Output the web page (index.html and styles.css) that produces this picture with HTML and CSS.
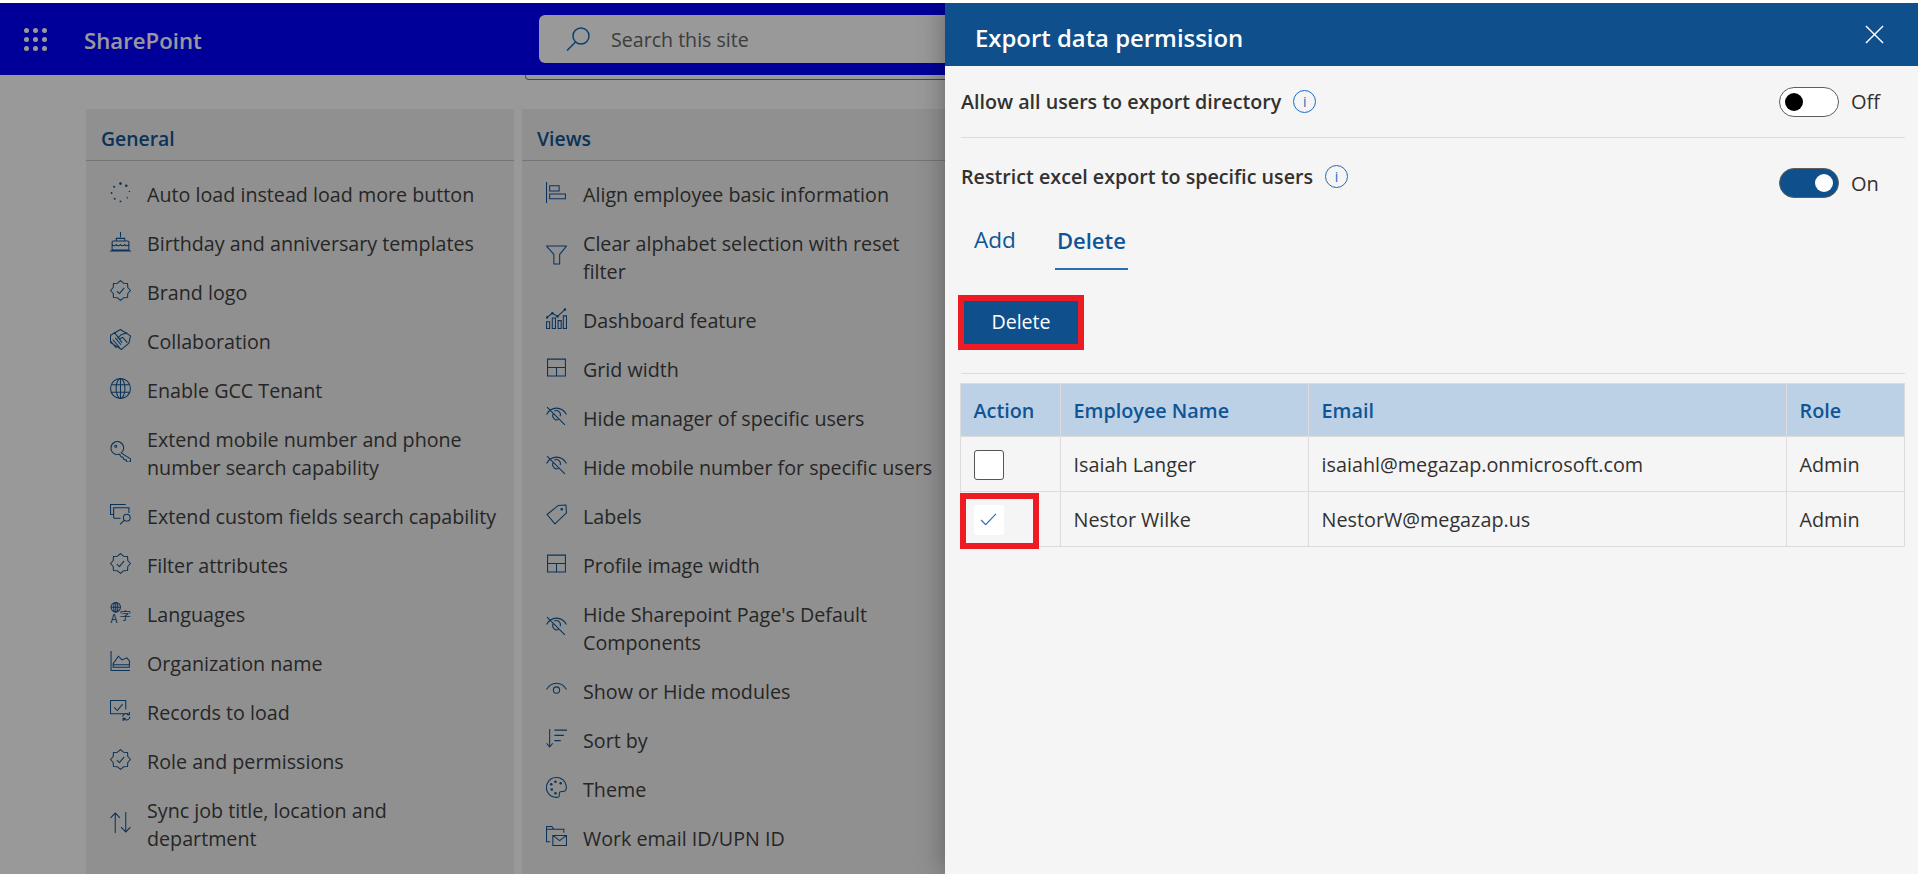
FILE: index.html
```html
<!DOCTYPE html>
<html lang="en">

<head>
    <meta charset="UTF-8">
    <title>Export data permission</title>
    <link rel="stylesheet" href="styles.css">
</head>

<body>
    <svg class="icon-defs" aria-hidden="true">
        <symbol id="i-spin" viewBox="0 0 20 20"><g fill="currentColor" stroke="none"><circle cx="10" cy="1.5" r="1.3"/><circle cx="15.5" cy="3.5" r="1.2"/><circle cx="18.5" cy="9" r=".7"/><circle cx="16.5" cy="15" r=".7"/><circle cx="10" cy="18.5" r=".9"/><circle cx="4.5" cy="16" r=".9"/><circle cx="1.5" cy="10.5" r=".9"/><circle cx="4" cy="4.5" r="1"/></g></symbol>
        <symbol id="i-cake" viewBox="0 0 20 20"><path d="M10 1v5M3 9.5h14a1 1 0 0 1 1 1V18H2v-7.5a1 1 0 0 1 1-1zM6 9.5V7h8v2.500M2 13c2 1.500 3 1.500 4 0 1 1.500 3 1.500 4 0 1 1.500 3 1.500 4 0 1 1.500 2 1.500 4 0M0 19h20"/></symbol>
        <symbol id="i-badge" viewBox="0 0 20 20"><path d="M10 .5l2.870 2.570 3.850.21.210 3.850L19.500 10l-2.570 2.870-.21 3.850-3.850.21L10 19.500l-2.870-2.570-3.850-.21-.21-3.850L.5 10l2.570-2.870.21-3.850 3.850-.21zM6.500 10.500L9 13l4.500-5.500" stroke-linejoin="round"/></symbol>
        <symbol id="i-hands" viewBox="0 0 20 20"><path d="M10 .5l9.500 6-1.500 7-7 6-10.500-6.500L.5 6zM4 3l7.500 10M16.500 3.500l-6 2-3 3 1.500 1 3-1.500 4.500 5M2.500 10l6.500 7.500M5 8.500l5.500 6.500M1 12l5 6" stroke-linejoin="round"/></symbol>
        <symbol id="i-globe" viewBox="0 0 20 20"><circle cx="10" cy="10" r="9.500"/><ellipse cx="10" cy="10" rx="4.200" ry="9.500"/><path d="M10 .5v19M1.200 6.500h17.600M1.200 13.500h17.600"/></symbol>
        <symbol id="i-key" viewBox="0 0 20 20"><path d="M1 6.500a6 6 0 1 1 9.600 4.800L19.500 17v3h-3.500l-.5-2-2.500-.5-.5-2-2-.5-1.500-2.500a6 6 0 0 1-8-6.500z" stroke-linejoin="round"/><circle cx="5.500" cy="5" r="1"/></symbol>
        <symbol id="i-fields" viewBox="0 0 20 20"><path d="M3 10H.5V.5H15M3.500 13.500V3.500H18v5M3.500 13.500h6.500"/><circle cx="16" cy="13" r="3.200"/><path d="M13.500 15.500L9.500 19.500"/></symbol>
        <symbol id="i-lang" viewBox="0 0 20 20"><circle cx="5.500" cy="5" r="4.500"/><ellipse cx="5.500" cy="5" rx="2" ry="4.500"/><path d="M1 5h9M5.500 .5v9"/><text x="0.500" y="19.800" class="icon-glyph">A</text><text x="9" y="17" class="icon-glyph">字</text></symbol>
        <symbol id="i-chart" viewBox="0 0 20 20"><path d="M1 0v18.500h18M3 15.500V12l5-7 3.500 3.500L16 6.500l2.500 3v6zM3 13h15"/></symbol>
        <symbol id="i-recs" viewBox="0 0 20 20"><path d="M14 13H.5V.5H15V9M4 7l3 3 5-6M12 16a3.500 3.500 0 0 1 6-2M19 16a3.500 3.500 0 0 1-6 2M18.500 11.500V14H16M12.500 20v-2.500H15"/></symbol>
        <symbol id="i-sync" viewBox="0 0 20 20"><path d="M5 20V1M.5 5.500L5 1l4.500 4.500M15 0v19M10.500 14.500L15 19l4.500-4.500"/></symbol>
        <symbol id="i-align" viewBox="0 0 20 20"><path d="M.5 0v20M3.500 3.500h9v5h-9zM3.500 11.500h15v4.500h-15z"/></symbol>
        <symbol id="i-filter" viewBox="0 0 20 20"><path d="M.5 1h19L13 9v9H7.500V9zM.5 1h19" stroke-linejoin="round"/></symbol>
        <symbol id="i-dash" viewBox="0 0 20 20"><path d="M.5 13h3v6.500h-3zM6 9.500h3v10H6zM11.500 12h3v7.500h-3zM16.500 7.500h3v12h-3zM1 9l5-4 5 3 7-6.500"/><g fill="currentColor" stroke="none"><circle cx="6" cy="5" r="1.200"/><circle cx="11" cy="8" r="1.200"/><circle cx="18" cy="1.500" r="1.200"/><circle cx="1" cy="9" r="1.200"/></g></symbol>
        <symbol id="i-grid" viewBox="0 0 20 20"><path d="M1.500 2h17v16h-17zM1.500 10h17M10 10v8"/></symbol>
        <symbol id="i-eyeoff" viewBox="0 0 20 20"><path d="M.5 8C3 3.500 6 2 10 2s7 1.500 9.500 6M1 1l17 17M7 7a4 4 0 0 0 5.500 5.500M8 4.800a4 4 0 0 1 5.500 5"/></symbol>
        <symbol id="i-tag" viewBox="0 0 20 20"><path d="M1 10L11.500 1.500 19 1l.5 7.500L8.500 19z" stroke-linejoin="round"/><circle cx="15" cy="5" r=".8" fill="currentColor"/></symbol>
        <symbol id="i-eye" viewBox="0 0 20 20"><path d="M.5 10C3 5.500 6 4 10 4s7 1.500 9.500 6"/><circle cx="10" cy="10.500" r="3"/></symbol>
        <symbol id="i-sort" viewBox="0 0 20 20"><path d="M3.500 1v17M.5 14.500l3 3.500 3-3.500M8 2h12M8 7h9M8 12h6"/></symbol>
        <symbol id="i-palette" viewBox="0 0 20 20"><path d="M10 .5a9.500 9.500 0 0 0-7 16c2 2.500 6.500 3.500 9 2.500 1.500-1 0-3 1-4.500s4 0 5.500-1.500c1.500-2 1-5-.5-8A9.500 9.500 0 0 0 10 .5z"/><g fill="currentColor" stroke="none"><circle cx="5" cy="7" r="1.200"/><circle cx="9" cy="4.500" r="1.200"/><circle cx="14" cy="6" r="1.200"/><circle cx="5.500" cy="12" r="1.200"/><circle cx="9" cy="15.500" r="1.200"/></g></symbol>
        <symbol id="i-mail" viewBox="0 0 20 20"><path d="M4 15H.5V.5h5l2 2.500H17v3.500M.5 3h7M6.500 9h13v9.500h-13zM6.500 9l6.500 5 6.500-5"/></symbol>
    </svg>

    <div class="app">
        <header class="suite-bar">
            <div class="waffle">
                <i></i><i></i><i></i><i></i><i></i><i></i><i></i><i></i><i></i>
            </div>
            <span class="brand">SharePoint</span>
            <div class="search-box">
                <svg class="search-icon" viewBox="0 0 24 24"><circle cx="15" cy="9" r="8"/><path d="M9.500 15L1 23.500"/></svg>
                <span>Search this site</span>
            </div>
        </header>
        <div class="peek-box"></div>

        <main class="settings">
            <section class="card">
                <h2 class="card-title">General</h2>
                <ul class="item-list">
                    <li><svg class="item-icon"><use href="#i-spin"/></svg><span>Auto load instead load more button</span></li>
                    <li><svg class="item-icon"><use href="#i-cake"/></svg><span>Birthday and anniversary templates</span></li>
                    <li><svg class="item-icon"><use href="#i-badge"/></svg><span>Brand logo</span></li>
                    <li><svg class="item-icon"><use href="#i-hands"/></svg><span>Collaboration</span></li>
                    <li><svg class="item-icon"><use href="#i-globe"/></svg><span>Enable GCC Tenant</span></li>
                    <li><svg class="item-icon"><use href="#i-key"/></svg><span>Extend mobile number and phone<br>number search capability</span></li>
                    <li><svg class="item-icon"><use href="#i-fields"/></svg><span>Extend custom fields search capability</span></li>
                    <li><svg class="item-icon"><use href="#i-badge"/></svg><span>Filter attributes</span></li>
                    <li><svg class="item-icon"><use href="#i-lang"/></svg><span>Languages</span></li>
                    <li><svg class="item-icon"><use href="#i-chart"/></svg><span>Organization name</span></li>
                    <li><svg class="item-icon"><use href="#i-recs"/></svg><span>Records to load</span></li>
                    <li><svg class="item-icon"><use href="#i-badge"/></svg><span>Role and permissions</span></li>
                    <li><svg class="item-icon"><use href="#i-sync"/></svg><span>Sync job title, location and<br>department</span></li>
                </ul>
            </section>

            <section class="card">
                <h2 class="card-title">Views</h2>
                <ul class="item-list">
                    <li><svg class="item-icon"><use href="#i-align"/></svg><span>Align employee basic information</span></li>
                    <li><svg class="item-icon"><use href="#i-filter"/></svg><span>Clear alphabet selection with reset<br>filter</span></li>
                    <li><svg class="item-icon"><use href="#i-dash"/></svg><span>Dashboard feature</span></li>
                    <li><svg class="item-icon"><use href="#i-grid"/></svg><span>Grid width</span></li>
                    <li><svg class="item-icon"><use href="#i-eyeoff"/></svg><span>Hide manager of specific users</span></li>
                    <li><svg class="item-icon"><use href="#i-eyeoff"/></svg><span>Hide mobile number for specific users</span></li>
                    <li><svg class="item-icon"><use href="#i-tag"/></svg><span>Labels</span></li>
                    <li><svg class="item-icon"><use href="#i-grid"/></svg><span>Profile image width</span></li>
                    <li><svg class="item-icon"><use href="#i-eyeoff"/></svg><span>Hide Sharepoint Page's Default<br>Components</span></li>
                    <li><svg class="item-icon"><use href="#i-eye"/></svg><span>Show or Hide modules</span></li>
                    <li><svg class="item-icon"><use href="#i-sort"/></svg><span>Sort by</span></li>
                    <li><svg class="item-icon"><use href="#i-palette"/></svg><span>Theme</span></li>
                    <li><svg class="item-icon"><use href="#i-mail"/></svg><span>Work email ID/UPN ID</span></li>
                </ul>
            </section>
        </main>

        <div class="dim"></div>

        <aside class="panel">
            <div class="panel-head">
                <h1>Export data permission</h1>
                <svg class="close-icon" viewBox="0 0 20 20"><path d="M1 1l18 18M19 1L1 19"/></svg>
            </div>

            <div class="panel-body">
                <div class="option option-first">
                    <div class="option-label">
                        Allow all users to export directory
                        <span class="info">i</span>
                    </div>
                    <div class="switch-wrap">
                        <span class="switch"></span>
                        <span>Off</span>
                    </div>
                </div>

                <div class="option option-second">
                    <div class="option-label">
                        Restrict excel export to specific users
                        <span class="info">i</span>
                    </div>
                    <div class="switch-wrap">
                        <span class="switch on"></span>
                        <span>On</span>
                    </div>
                </div>

                <div class="tabs">
                    <span class="tab">Add</span>
                    <span class="tab active">Delete</span>
                </div>

                <button class="delete-btn">Delete</button>

                <hr class="rule">

                <table class="users">
                    <thead>
                        <tr>
                            <th class="col-action">Action</th>
                            <th class="col-name">Employee Name</th>
                            <th class="col-email">Email</th>
                            <th>Role</th>
                        </tr>
                    </thead>
                    <tbody>
                        <tr>
                            <td><span class="check"></span></td>
                            <td>Isaiah Langer</td>
                            <td>isaiahl@megazap.onmicrosoft.com</td>
                            <td>Admin</td>
                        </tr>
                        <tr>
                            <td class="marked">
                                <span class="check checked">
                                    <svg viewBox="0 0 18 14"><path d="M1 7.500l5 5L17 1"/></svg>
                                </span>
                            </td>
                            <td>Nestor Wilke</td>
                            <td>NestorW@megazap.us</td>
                            <td>Admin</td>
                        </tr>
                    </tbody>
                </table>
            </div>
        </aside>
    </div>
</body>

</html>
```

FILE: styles.css
```css
*,
*::after {
    box-sizing: border-box;
}

html,
body {
    height: 100%;
    margin: 0;
    overflow: hidden;
    background-color: white;
}

body {
    font-family: 'Open Sans', 'Noto Sans', sans-serif;
    color: #323130;
}

.icon-defs {
    display: none;
}

.icon-glyph {
    font-size: 11px;
    fill: currentColor;
    stroke: none;
    font-family: 'Noto Sans CJK SC', sans-serif;
}

.app {
    position: relative;
    height: 871px;
    margin-top: 3px;
    overflow: hidden;
    background-color: white;
}

/* top bar */
.suite-bar {
    display: flex;
    align-items: center;
    height: 72px;
    background-color: #0000ff;
    color: white;
}

.waffle {
    display: grid;
    grid-template-columns: repeat(3, 5px);
    gap: 4px;
    margin-left: 24px;
}

.waffle i {
    width: 5px;
    height: 5px;
    border-radius: 50%;
    background-color: white;
}

.brand {
    width: 455px;
    margin-left: 37px;
    padding-top: 2px;
    font-size: 22.200px;
    font-weight: 600;
}

.search-box {
    display: flex;
    align-items: center;
    flex: 1;
    height: 48px;
    padding-left: 27px;
    border-radius: 6px;
    background-color: white;
    color: #666;
    font-size: 19.600px;
}

.search-icon {
    width: 24px;
    height: 24px;
    margin-right: 21px;
    fill: none;
    stroke: #0f6cbd;
    stroke-width: 1.500;
}

.peek-box {
    height: 5px;
    margin-left: 525px;
    border: 1px solid #777;
    border-top: none;
    border-radius: 0 0 0 4px;
}

/* settings cards behind the panel */
.settings {
    display: grid;
    grid-template-columns: 428px 470px;
    gap: 8px;
    margin-top: 29px;
    padding-left: 86px;
}

.card {
    height: 800px;
    background-color: #f0f0f0;
}

.card-title {
    height: 52px;
    margin: 0;
    padding: 0 0 0 15px;
    border-bottom: 1px solid #c4c4c4;
    font-size: 19.400px;
    font-weight: 600;
    line-height: 60px;
    color: #0f5596;
}

.item-list {
    display: flex;
    flex-direction: column;
    gap: 21px;
    margin: 0;
    padding: 20px 0 0 24px;
    list-style: none;
}

.item-list li {
    display: flex;
    align-items: center;
    font-size: 19.700px;
    line-height: 28px;
    color: #404040;
    white-space: nowrap;
}

.item-icon {
    flex: none;
    width: 21px;
    height: 21px;
    margin: -5px 16px 0 0;
    fill: none;
    stroke: #0f5596;
    stroke-width: 1;
    color: #0f5596;
}

.dim {
    position: absolute;
    top: 0;
    left: 0;
    right: 0;
    bottom: 0;
    background-color: rgba(0, 0, 0, 0.4);
}

/* side panel */
.panel {
    position: absolute;
    top: 0;
    left: 945px;
    right: 0;
    bottom: 0;
    background-color: #f5f5f5;
    box-shadow: 0 0 26px rgba(0, 0, 0, 0.35);
}

.panel-head {
    display: flex;
    align-items: center;
    justify-content: space-between;
    height: 63px;
    padding: 0 34px 0 30px;
    background-color: #0f4f8b;
    color: white;
}

.panel-head h1 {
    margin: 5px 0 0;
    font-size: 23.900px;
    font-weight: 600;
}

.close-icon {
    width: 19px;
    height: 19px;
    fill: none;
    stroke: white;
    stroke-width: 1.500;
}

.panel-body {
    padding: 0 13px 0 16px;
}

.option {
    display: flex;
    justify-content: space-between;
}

.option-first {
    align-items: center;
    height: 72px;
    border-bottom: 1px solid #dcdcdc;
}

.option-second {
    height: 62px;
    padding-top: 24px;
}

.option-label {
    display: flex;
    align-items: center;
    gap: 12px;
    height: 28px;
    font-size: 19.700px;
    font-weight: 600;
    white-space: nowrap;
}

.info {
    display: flex;
    align-items: center;
    justify-content: center;
    width: 23px;
    height: 23px;
    border: 1.500px solid #1a6cc0;
    border-radius: 50%;
    font-size: 14px;
    font-weight: 400;
    color: #1a6cc0;
}

.switch-wrap {
    display: flex;
    align-items: center;
    gap: 12px;
    width: 126px;
    font-size: 20px;
}

.option-second .switch-wrap {
    height: 30px;
    margin-top: 6px;
}

.switch {
    position: relative;
    width: 60px;
    height: 30px;
    border: 1px solid #605e5c;
    border-radius: 15px;
    background-color: white;
}

.switch::after {
    content: '';
    position: absolute;
    top: 5px;
    left: 5px;
    width: 18px;
    height: 18px;
    border-radius: 50%;
    background-color: black;
}

.switch.on {
    background-color: #0f4f8b;
}

.switch.on::after {
    left: 35px;
    background-color: white;
}

.tabs {
    display: flex;
    gap: 39px;
    height: 71px;
    padding: 23px 0 0 13px;
    font-size: 22.600px;
    line-height: 34px;
    color: #0f5596;
}

.tab {
    height: 47px;
}

.tab.active {
    padding: 0 2px;
    border-bottom: 2px solid #2a6fb5;
    font-size: 22px;
    font-weight: 600;
}

.delete-btn {
    display: block;
    width: 126px;
    height: 55px;
    margin: 24px 0 0 -3px;
    padding: 0 0 3px;
    border: 6px solid #ed1c24;
    background-color: #0f4f8b;
    color: white;
    font-family: inherit;
    font-size: 19.600px;
}

.rule {
    height: 1px;
    margin: 23px 0 9px;
    border: none;
    background-color: #dcdcdc;
}

.users {
    width: 945px;
    margin-left: -1px;
    border-collapse: collapse;
    table-layout: fixed;
    font-size: 19.800px;
}

.users th,
.users td {
    padding: 1px 0 0 12.500px;
    border: 1.500px solid #dcdcdc;
    text-align: left;
    white-space: nowrap;
}

.users th {
    height: 53px;
    background-color: #bcd1e5;
    font-weight: 600;
    color: #0f5596;
}

.users td {
    height: 55px;
}

.col-action {
    width: 100px;
}

.col-name {
    width: 248px;
}

.col-email {
    width: 478px;
}

.check {
    display: block;
    width: 30px;
    height: 30px;
    border: 1px solid #555;
    border-radius: 3px;
    background-color: white;
}

.check.checked {
    display: flex;
    align-items: center;
    justify-content: center;
    border: none;
}

.check svg {
    width: 17px;
    height: 13px;
    fill: none;
    stroke: #2a6fb5;
    stroke-width: 1.300;
}

.marked {
    position: relative;
}

.marked::after {
    content: '';
    position: absolute;
    top: 1px;
    left: -1px;
    width: 79px;
    height: 56px;
    border: 6px solid #ed1c24;
}
```
